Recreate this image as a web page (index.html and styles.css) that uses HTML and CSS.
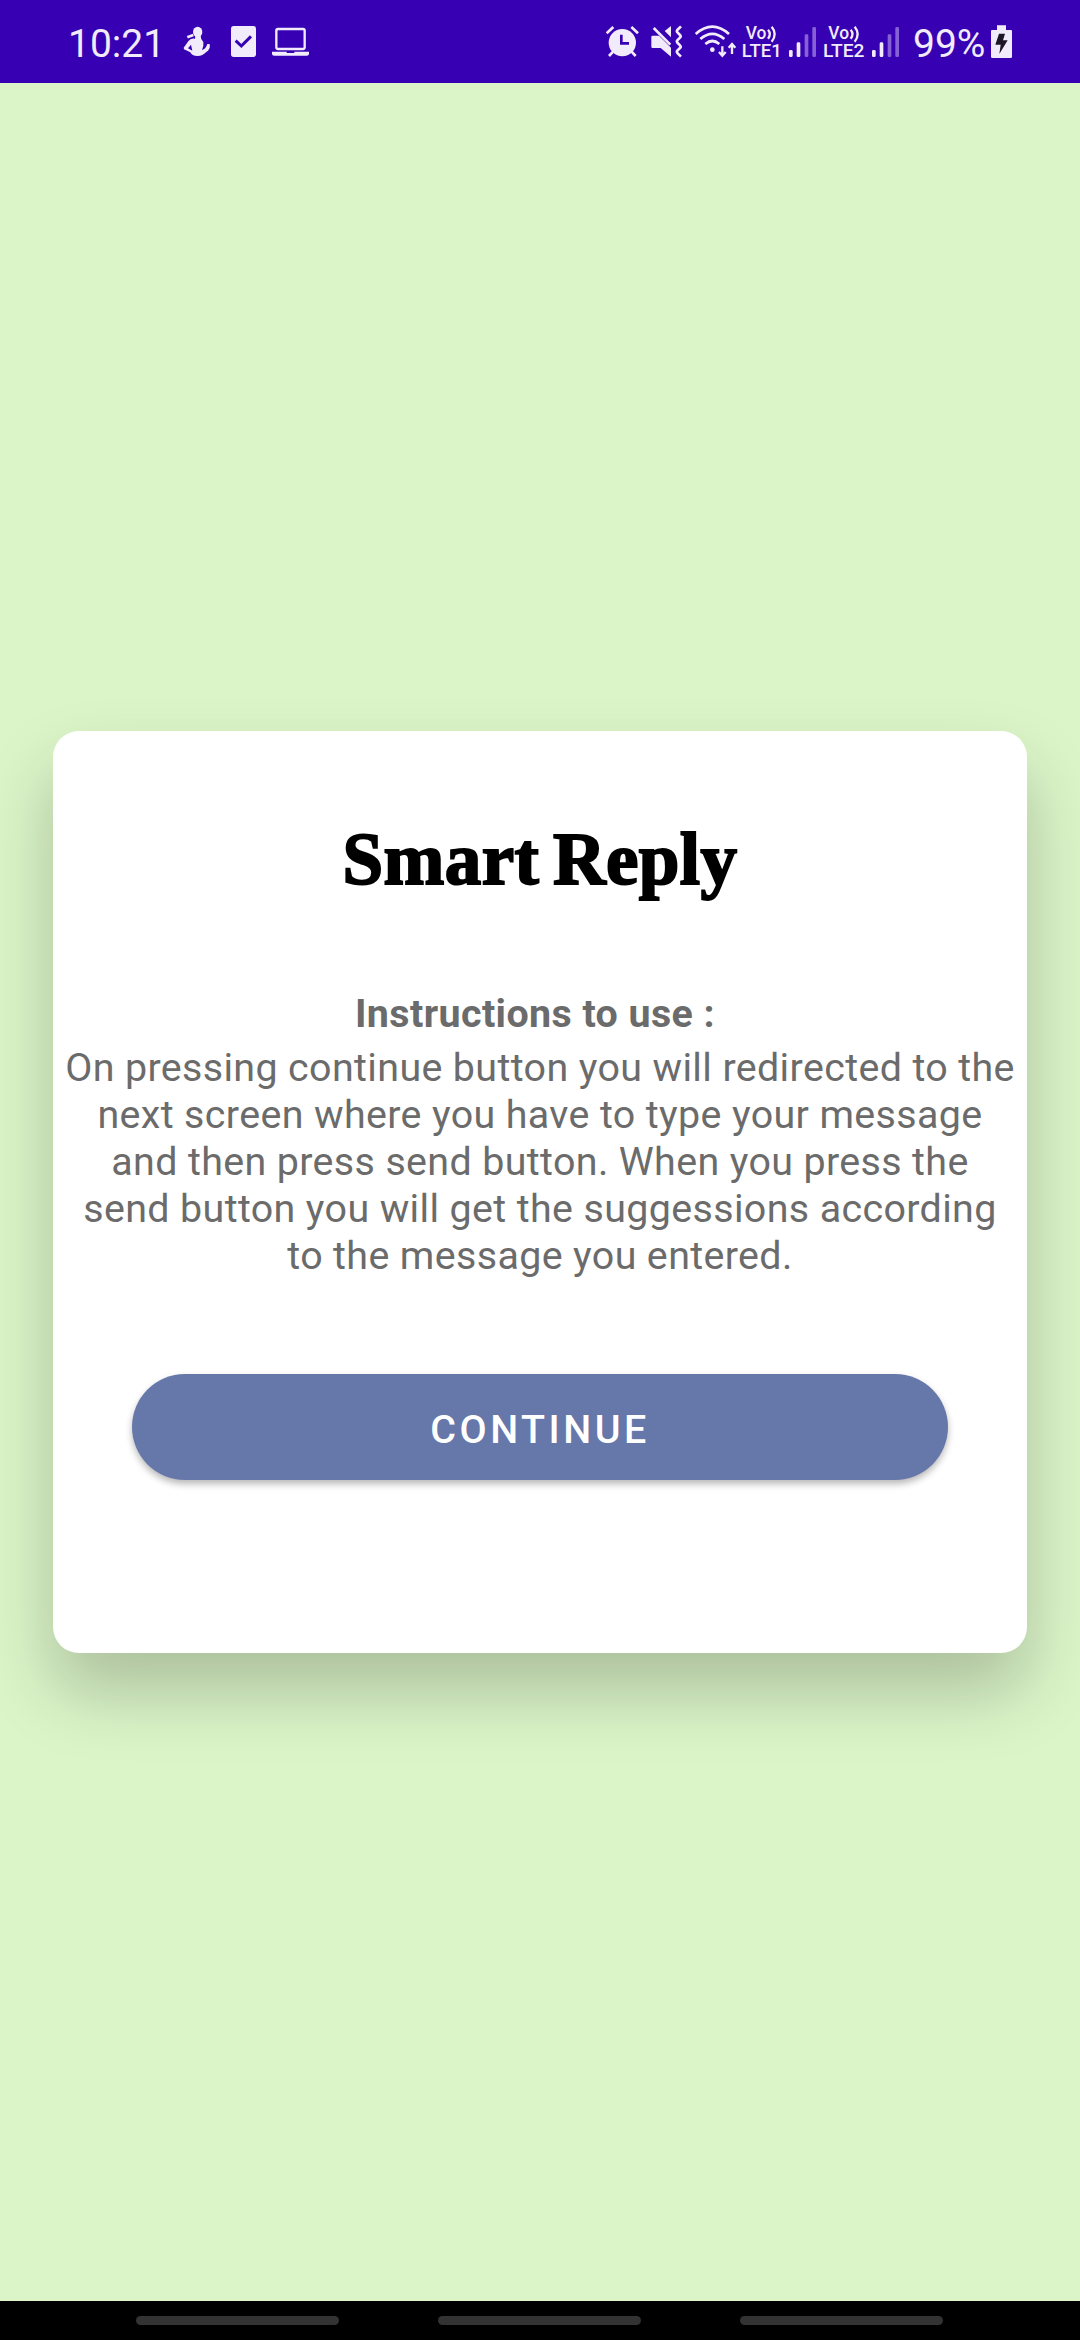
FILE: index.html
```html
<!DOCTYPE html>
<html lang="en">
<head>
<meta charset="utf-8">
<title>Smart Reply</title>
<link rel="stylesheet" href="styles.css">
</head>
<body>
<div class="screen">
  <header class="status">
    <span class="clock">10:21</span>
    <svg class="icon person" viewBox="399 75 84 99" width="28" height="33">
      <ellipse cx="443" cy="96" rx="14" ry="16"/>
      <path d="M412 112L430 105" stroke-width="8" class="line"/>
      <path fill-rule="evenodd" d="M436 108L452 108Q452 119 460 126Q462 138 456 150Q467 148 472 132L479 132Q482 148 468 157Q458 168 443 168Q425 168 421 157L402 148L401 143L416 122Q424 114 435 116ZM423 134L414 145L427 152Z"/>
    </svg>
    <svg class="icon task" viewBox="540 75 81 99" width="27" height="33">
      <rect x="543" y="78" width="75" height="93" rx="8"/>
      <path d="M557 122L574 138L603 109" class="cut" stroke-width="9"/>
    </svg>
    <svg class="icon laptop" viewBox="663 75 117 99" width="39" height="33">
      <rect x="679" y="87" width="85" height="60" rx="5" class="line" stroke-width="7"/>
      <path d="M666 155H710V159H733V155H777V162Q777 167 770 167H673Q666 167 666 162Z"/>
    </svg>
    <div class="spacer"></div>
    <svg class="icon alarm" viewBox="45 75 105 99" width="35" height="33">
      <circle cx="97" cy="128" r="41"/>
      <path d="M50 100L70 81M124 81L144 100M70 154L57 168M124 154L137 168" class="line" stroke-width="8"/>
      <path d="M94 104V130H117" class="cut" stroke-width="8"/>
    </svg>
    <svg class="icon mute" viewBox="180 75 99 99" width="33" height="33">
      <path d="M184 110Q184 107 188 107H207L243 143V170L212 144H188Q184 144 184 140ZM224 93L243 78V112Z"/>
      <path d="M191 84L241 134" class="line" stroke-width="8"/>
      <path d="M273 79L262 90Q259 94 263 98L270 105Q274 109 270 113L262 121Q259 125 263 129L270 136Q274 140 270 144L262 152Q259 156 263 160L273 170" class="line" stroke-width="8"/>
    </svg>
    <svg class="icon wifi" viewBox="312 75 129 99" width="43" height="33">
      <path d="M317 102Q367 58 417 102M331 117Q367 86 403 117M346 132Q367 114 388 132" class="line" stroke-width="8"/>
      <circle cx="367" cy="149" r="7"/>
      <path d="M397 139V166M387 156L397 167L407 156M426 162V134M416 143L426 132L436 143" class="line" stroke-width="7"/>
    </svg>
    <svg class="icon volte" viewBox="453 75 123 99" width="41" height="33">
      <text x="467" y="118" textLength="62" lengthAdjust="spacingAndGlyphs">Vo</text>
      <path d="M534 89Q545 102 534 116M545 80Q563 102 545 125" class="line" stroke-width="7"/>
      <text x="455" y="171" textLength="120" lengthAdjust="spacingAndGlyphs">LTE1</text>
    </svg>
    <svg class="icon signal" viewBox="594 75 87 99" width="29" height="33">
      <rect x="597" y="150" width="11" height="21" rx="4"/>
      <rect x="620" y="127" width="11" height="44" rx="4"/>
      <rect x="644" y="103" width="11" height="68" rx="4" class="dim"/>
      <rect x="667" y="81" width="11" height="90" rx="4" class="dim"/>
    </svg>
    <svg class="icon volte second" viewBox="39 75 123 99" width="41" height="33">
      <text x="55" y="118" textLength="62" lengthAdjust="spacingAndGlyphs">Vo</text>
      <path d="M122 89Q133 102 122 116M134 80Q152 102 134 125" class="line" stroke-width="7"/>
      <text x="39" y="171" textLength="124" lengthAdjust="spacingAndGlyphs">LTE2</text>
    </svg>
    <svg class="icon signal second" viewBox="594 75 87 99" width="29" height="33">
      <rect x="597" y="150" width="11" height="21" rx="4"/>
      <rect x="620" y="127" width="11" height="44" rx="4"/>
      <rect x="644" y="103" width="11" height="68" rx="4" class="dim"/>
      <rect x="667" y="81" width="11" height="90" rx="4" class="dim"/>
    </svg>
    <span class="percent">99%</span>
    <svg class="icon battery" viewBox="540 75 69 99" width="23" height="33">
      <path d="M561 76H588V90H603Q606 90 606 93V170Q606 174 602 174H547Q543 174 543 170V93Q543 90 546 90H561Z"/>
      <path d="M567 101H585L579 121H593L568 162L572 134H556Z" class="bolt"/>
    </svg>
  </header>

  <main class="page">
    <section class="card">
      <h1 class="title">Smart Reply</h1>
      <h2 class="subtitle">Instructions to use :&nbsp;</h2>
      <p class="body">On pressing continue button you will redirected to the<br>next screen where you have to type your message<br>and then press send button. When you press the<br>send button you will get the suggessions according<br>to the message you entered.</p>
      <button class="continue">CONTINUE</button>
    </section>
  </main>

  <nav class="navbar">
    <span class="pill"></span>
    <span class="pill"></span>
    <span class="pill"></span>
  </nav>
</div>
</body>
</html>
```
FILE: styles.css
```css
* { box-sizing: border-box; }
body { margin: 0; font-family: Roboto, sans-serif; }

.screen {
  width: 1080px;
  height: 2340px;
  display: flex;
  flex-direction: column;
  overflow: hidden;
  background: #dbf5c8;
}

/* Status bar */
.status {
  flex: none;
  height: 83px;
  padding: 0 67px 0 68px;
  display: flex;
  align-items: center;
  background: #3700b3;
  color: #f2ebfb;
  font-size: 39px;
}
.clock { width: 115px; padding-top: 4px; line-height: 46px; }
.percent { width: 77px; margin-left: 13px; padding-top: 4px; line-height: 46px; }
.spacer { flex: 1; }
.icon { flex: none; display: block; fill: #f2ebfb; overflow: visible; }
.icon .line { fill: none; stroke: #f2ebfb; }
.icon .cut { fill: none; stroke: #3700b3; }
.icon .dim { fill: #8660d5; }
.icon .bolt { fill: #1c1626; }
.icon text { font-size: 55px; font-weight: 500; }
.task { margin-left: 19px; }
.laptop { margin-left: 14px; }
.mute { margin-left: 10px; }
.wifi { margin-left: 11px; }
.volte { margin-left: 4px; }
.signal { margin-left: 6px; }
.volte.second { margin-left: 6px; }
.signal.second { margin-left: 7px; }

/* Content */
.page { flex: 1; padding: 648px 53px 0; }
.card {
  height: 922px;
  padding-top: 84px;
  display: flex;
  flex-direction: column;
  align-items: center;
  border-radius: 26px;
  background: #fff;
  box-shadow: 0 38px 70px rgba(0, 0, 0, 0.22);
  text-align: center;
  color: #6b6b6b;
}
.title {
  margin: 0;
  font: bold 73px/90px "Liberation Serif", serif;
  letter-spacing: 0.4px;
  word-spacing: -5px;
  color: #000;
  -webkit-text-stroke: 2px #000;
  white-space: nowrap;
}
.subtitle {
  margin: 85px 0 0;
  font-size: 39.4px;
  line-height: 47px;
  font-weight: 700;
  letter-spacing: 0.4px;
}
.body {
  margin: 7px 0 0;
  font-size: 39.4px;
  line-height: 47px;
  letter-spacing: 0.37px;
  white-space: nowrap;
}
.continue {
  width: 816px;
  height: 106px;
  margin-top: 95px;
  padding: 4px 0 0;
  border: 0;
  border-radius: 53px;
  background: #6677aa;
  box-shadow: 0 4px 7px rgba(0, 0, 0, 0.28);
  color: #fff;
  font: 500 39.4px/47px Roboto, sans-serif;
  letter-spacing: 3.5px;
}

/* Navigation bar */
.navbar {
  flex: none;
  height: 39px;
  padding: 15px 0 0 136px;
  display: flex;
  gap: 99px;
  background: #000;
}
.pill { width: 203px; height: 9px; border-radius: 5px; background: #333; }
```
